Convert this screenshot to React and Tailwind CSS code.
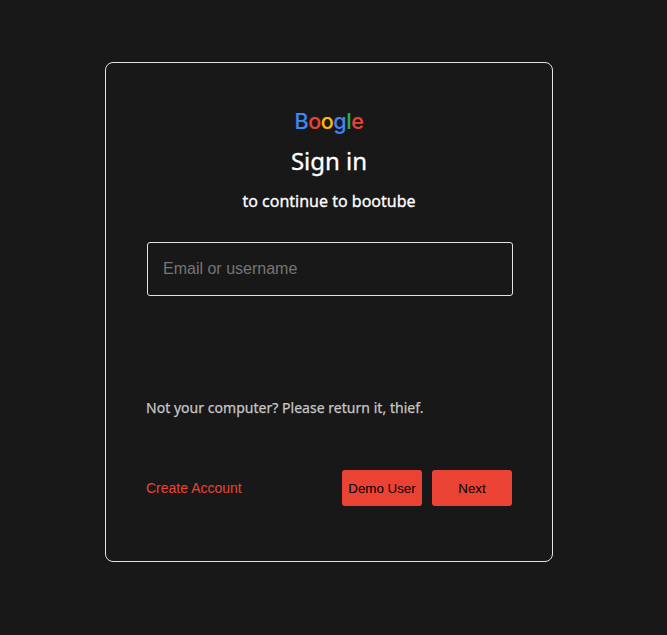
const LOGO = [
  ['B', 'text-[#4285f4]'],
  ['o', 'text-[#ea4335]'],
  ['o', 'text-[#fbbc05]'],
  ['g', 'text-[#4285f4]'],
  ['l', 'text-[#34a853]'],
  ['e', 'text-[#ea4335]'],
];

export default function App() {
  return (
    <div className="h-[635px] overflow-hidden bg-[#181818] pt-[62px] pl-[105px] font-['Noto_Sans',sans-serif] text-white">
      <form className="flex h-[500px] w-[448px] flex-col rounded-lg border border-[#e3e3e3] px-10 pt-[44px]" onSubmit={(e) => e.preventDefault()}>
        <div className="flex h-7 justify-center font-['Inter',sans-serif] text-[21.5px] leading-7 font-medium tracking-[-0.4px] [-webkit-text-stroke:0.1px]">
          {LOGO.map(([letter, color], i) => (
            <span key={i} className={color}>{letter}</span>
          ))}
        </div>
        <h1 className="mt-2.5 text-center text-2xl leading-8 font-normal [-webkit-text-stroke:0.3px]">Sign in</h1>
        <p className="mt-3 text-center text-base leading-6 font-normal [-webkit-text-stroke:0.3px]">to continue to bootube</p>
        <input
          className="mt-[29px] ml-px h-[54px] w-[366px] shrink-0 rounded-[3px] border border-[#e3e3e3] bg-transparent px-[15px] font-['Liberation_Sans',Arial,sans-serif] text-base outline-none placeholder:text-[#757575]"
          placeholder="Email or username"
        />
        <p className="mt-[102px] text-sm leading-5 font-normal tracking-[0.03px] whitespace-nowrap text-[#c6c6c6] [-webkit-text-stroke:0.25px]">Not your computer? Please return it, thief.</p>
        <div className="mt-[52px] flex h-9 items-center font-['Liberation_Sans',Arial,sans-serif]">
          <a className="text-sm text-[#ea4335]">Create Account</a>
          <button className="ml-auto h-9 w-20 rounded-[3px] bg-[#ea4335] pt-0.5 text-[13.333px] whitespace-nowrap text-black">Demo User</button>
          <button className="ml-2.5 h-9 w-20 rounded-[3px] bg-[#ea4335] pt-0.5 text-[13.333px] text-black">Next</button>
        </div>
      </form>
    </div>
  );
}
